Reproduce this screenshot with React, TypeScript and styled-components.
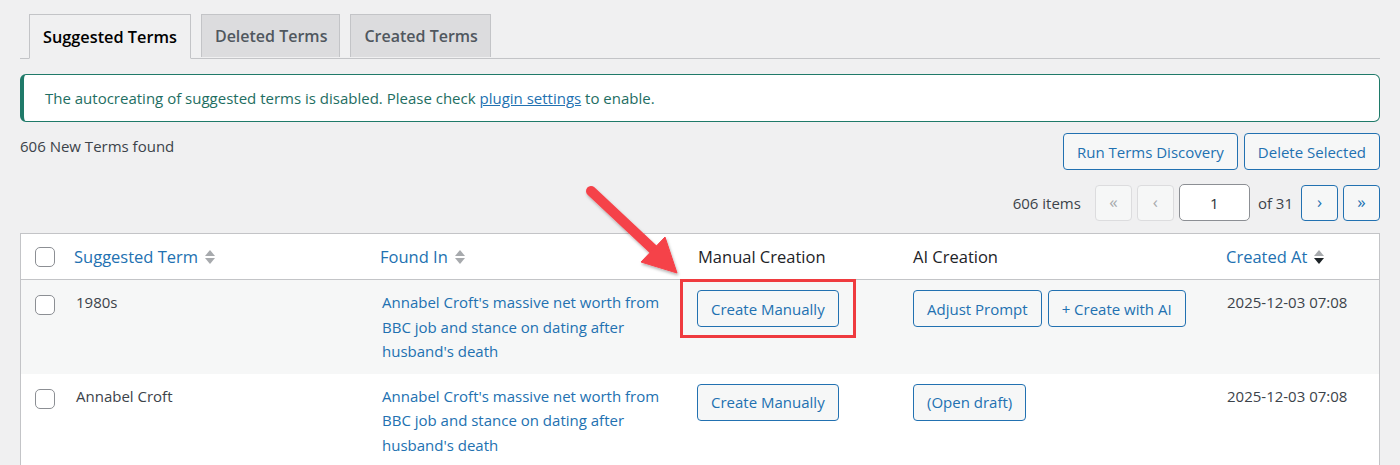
import React from "react";
import styled, { createGlobalStyle, css } from "styled-components";

const Global = createGlobalStyle`
  html, body { margin: 0; padding: 0; }
  body {
    background: #f0f0f1;
    font-family: "Open Sans", "Noto Sans", "Liberation Sans", sans-serif;
    font-size: 15px;
    color: #3c434a;
  }
`;

const Page = styled.div`
  position: relative;
  padding: 0 20px;
  height: 465px;
  overflow: hidden;
`;

const TabBar = styled.nav`
  display: flex;
  gap: 10px;
  padding: 14px 0 0 9px;
  border-bottom: 1px solid #c3c4c7;
`;

const Tab = styled.a<{ $active?: boolean }>`
  display: flex;
  align-items: center;
  height: 42px;
  border: 1px solid #c3c4c7;
  border-bottom: none;
  margin-bottom: -1px;
  font-size: 16.3px;
  font-weight: 600;
  text-decoration: none;
  cursor: pointer;
  ${(p) =>
    p.$active
      ? css`
          padding: 0 13px;
          background: #f0f0f1;
          color: #000;
          height: 43px;
          border-bottom: 1px solid #f0f0f1;
        `
      : css`
          padding: 0 12px 0 13px;
          font-size: 16px;
          background: #dcdcde;
          color: #50575e;
        `}
`;

const Notice = styled.div`
  margin-top: 15px;
  height: 48px;
  box-sizing: border-box;
  display: flex;
  align-items: center;
  padding: 0 21px;
  background: #fff;
  border: 1px solid #1f7a69;
  border-left-width: 4px;
  border-radius: 6px;
  color: #1e6e62;
  white-space: pre;
`;

const Link = styled.a`
  color: #2271b1;
  text-decoration: underline;
`;

const SummaryRow = styled.div`
  display: flex;
  justify-content: space-between;
  align-items: flex-start;
  margin-top: 11px;
`;

const Summary = styled.div`
  line-height: 24px;
  padding-top: 1px;
`;

const ButtonGroup = styled.div`
  display: flex;
  gap: 6px;
`;

const Button = styled.button`
  height: 37px;
  padding: 0 13px;
  border: 1px solid #2271b1;
  border-radius: 4px;
  background: #f6f7f7;
  color: #2271b1;
  font-family: inherit;
  font-size: 15px;
  white-space: nowrap;
  cursor: pointer;
`;

const PagerRow = styled.div`
  display: flex;
  justify-content: flex-end;
  align-items: center;
  gap: 5px;
  margin-top: 14px;
`;

const PagerText = styled.span<{ $gap?: number }>`
  margin: 0 ${(p) => p.$gap ?? 0}px;
`;

const PageButton = styled.button<{ $disabled?: boolean }>`
  width: 37px;
  height: 36px;
  box-sizing: border-box;
  border-radius: 4px;
  background: #f6f7f7;
  font-family: inherit;
  font-size: 17px;
  line-height: 1;
  padding: 0 0 3px;
  border: 1px solid ${(p) => (p.$disabled ? "#dcdcde" : "#2271b1")};
  color: ${(p) => (p.$disabled ? "#a7aaad" : "#2271b1")};
`;

const PageInput = styled.input`
  width: 71px;
  height: 37px;
  box-sizing: border-box;
  border: 1px solid #8c8f94;
  border-radius: 5px;
  background: #fff;
  text-align: center;
  font-family: inherit;
  font-size: 15px;
  color: #2c3338;
`;

const Table = styled.table`
  margin-top: 12px;
  width: 100%;
  border-collapse: collapse;
  table-layout: fixed;
  background: #fff;
  border: 1px solid #c3c4c7;
`;

const HeadCell = styled.th<{ $w?: number; $sortable?: boolean }>`
  ${(p) => (p.$w ? `width: ${p.$w}px;` : "")}
  height: 45px;
  padding: 0 10px;
  text-align: left;
  font-weight: 400;
  font-size: 16.5px;
  color: ${(p) => (p.$sortable ? "#2271b1" : "#1d2327")};
  border-bottom: 1px solid #c3c4c7;
  vertical-align: middle;
  white-space: nowrap;
`;

const HeadInner = styled.span`
  display: inline-flex;
  align-items: center;
  gap: 6px;
`;

const Row = styled.tr<{ $striped?: boolean }>`
  background: ${(p) => (p.$striped ? "#f6f7f7" : "#fff")};
`;

const Cell = styled.td<{ $pl?: number }>`
  vertical-align: top;
  padding: 10px 10px 10px ${(p) => p.$pl ?? 10}px;
  line-height: 24.5px;
`;

const CheckCell = styled.td`
  vertical-align: top;
  padding: 15px 0 0 14px;
`;

const CheckHead = styled.th`
  width: 29px;
  padding: 0 0 0 14px;
  border-bottom: 1px solid #c3c4c7;
  text-align: left;
  vertical-align: middle;
`;

const Checkbox = styled.span`
  display: block;
  width: 18px;
  height: 18px;
  border: 1px solid #8c8f94;
  border-radius: 5px;
  background: #fff;
`;

const TermText = styled.span`
  color: #3c434a;
`;

const PostLink = styled.a`
  color: #2271b1;
  text-decoration: none;
  display: block;
`;

const Actions = styled.div`
  display: flex;
  gap: 6px;
`;

const DateText = styled.span`
  color: #3c434a;
  white-space: nowrap;
`;

const Overlay = styled.svg`
  position: absolute;
  left: 0;
  top: 0;
  pointer-events: none;
`;

const SortIcon = ({ active }: { active?: boolean }) => (
  <svg width="12" height="18" viewBox="0 0 12 18">
    <path d="M1 8 L6 2 L11 8 Z" fill="#a7aaad" />
    <path d="M1 10 L6 16 L11 10 Z" fill={active ? "#1d2327" : "#a7aaad"} />
  </svg>
);

const rows = [
  { term: "1980s", ai: ["Adjust Prompt", "+ Create with AI"] },
  { term: "Annabel Croft", ai: ["(Open draft)"] },
];

export default function App() {
  return (
    <>
      <Global />
      <Page>
        <TabBar>
          <Tab $active>Suggested Terms</Tab>
          <Tab>Deleted Terms</Tab>
          <Tab>Created Terms</Tab>
        </TabBar>
        <Notice>
          {"The autocreating of suggested terms is disabled. Please check "}
          <Link>plugin settings</Link>
          {" to enable."}
        </Notice>
        <SummaryRow>
          <Summary>606 New Terms found</Summary>
          <ButtonGroup>
            <Button>Run Terms Discovery</Button>
            <Button>Delete Selected</Button>
          </ButtonGroup>
        </SummaryRow>
        <PagerRow>
          <PagerText $gap={9}>606 items</PagerText>
          <PageButton $disabled>«</PageButton>
          <PageButton $disabled>‹</PageButton>
          <PageInput defaultValue="1" />
          <PagerText $gap={3}>of 31</PagerText>
          <PageButton>›</PageButton>
          <PageButton>»</PageButton>
        </PagerRow>
        <Table>
          <thead>
            <tr>
              <CheckHead>
                <Checkbox />
              </CheckHead>
              <HeadCell $w={286} $sortable>
                <HeadInner>
                  Suggested Term <SortIcon />
                </HeadInner>
              </HeadCell>
              <HeadCell $w={298} $sortable>
                <HeadInner>
                  Found In <SortIcon />
                </HeadInner>
              </HeadCell>
              <HeadCell $w={195}>Manual Creation</HeadCell>
              <HeadCell $w={293}>AI Creation</HeadCell>
              <HeadCell $sortable>
                <HeadInner>
                  Created At <SortIcon active />
                </HeadInner>
              </HeadCell>
            </tr>
          </thead>
          <tbody>
            {rows.map((r, i) => (
              <Row key={r.term} $striped={i % 2 === 0}>
                <CheckCell>
                  <Checkbox />
                </CheckCell>
                <Cell $pl={12}>
                  <TermText>{r.term}</TermText>
                </Cell>
                <Cell $pl={12}>
                  <PostLink>
                    Annabel Croft's massive net worth from BBC job and stance on
                    dating after husband's death
                  </PostLink>
                </Cell>
                <Cell $pl={9}>
                  <Button>Create Manually</Button>
                </Cell>
                <Cell>
                  <Actions>
                    {r.ai.map((a) => (
                      <Button key={a}>{a}</Button>
                    ))}
                  </Actions>
                </Cell>
                <Cell $pl={11}>
                  <DateText>2025-12-03 07:08</DateText>
                </Cell>
              </Row>
            ))}
          </tbody>
        </Table>
        <Overlay width="1400" height="465" viewBox="0 0 1400 465">
          <defs>
            <filter id="sh" x="-20%" y="-20%" width="140%" height="140%">
              <feDropShadow dx="1" dy="2" stdDeviation="1.5" floodColor="#000" floodOpacity="0.3" />
            </filter>
          </defs>
          <rect x="681.5" y="280.5" width="173" height="56" fill="none" stroke="#ef3b3f" strokeWidth="3" />
          <g filter="url(#sh)" fill="#f5424a" stroke="#f5424a">
            <line x1="591" y1="191" x2="655" y2="251" strokeWidth="10" strokeLinecap="round" />
            <polygon points="641,262 665,237 677,273" strokeWidth="1" strokeLinejoin="round" />
          </g>
        </Overlay>
      </Page>
    </>
  );
}
